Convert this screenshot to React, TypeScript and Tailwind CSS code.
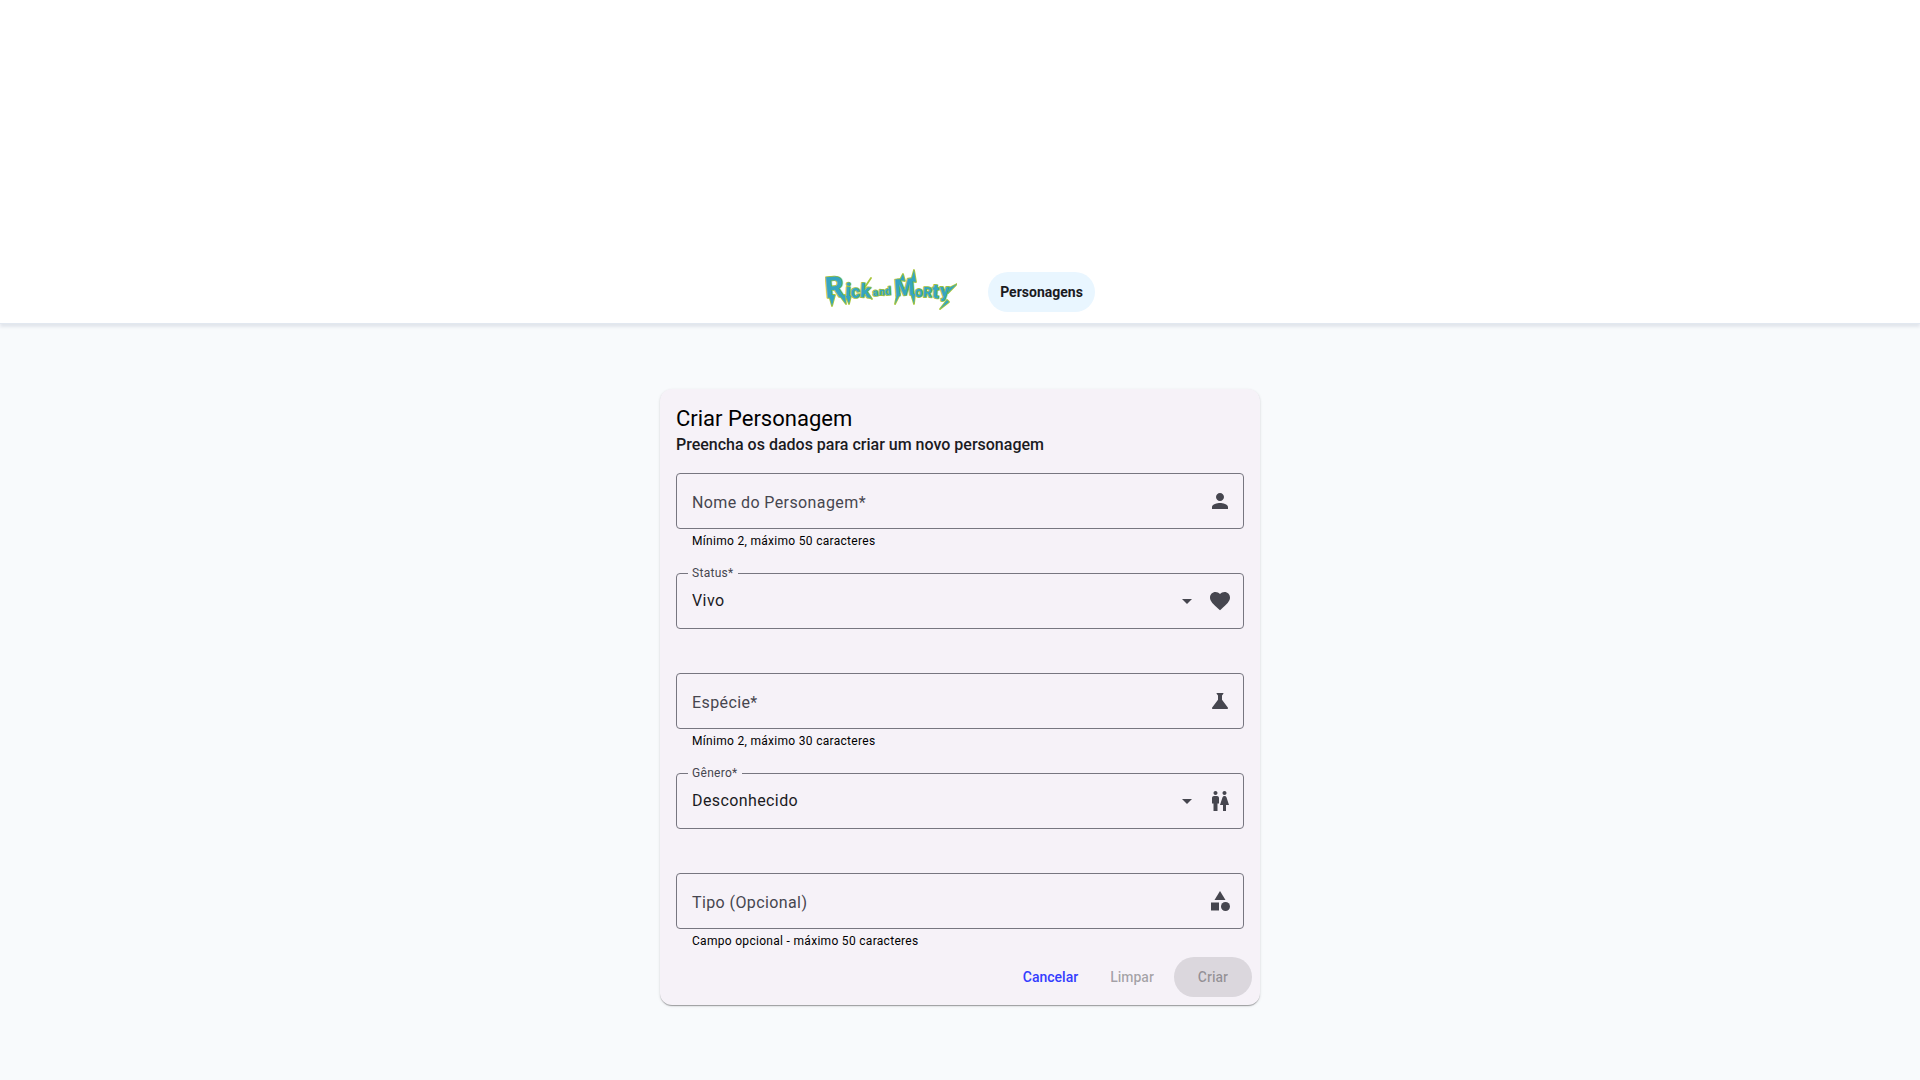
import type { ReactNode } from "react";
import { MdCategory, MdFavorite, MdPerson, MdScience, MdWc } from "react-icons/md";

const LETTERS = [
  { ch: "R", x: 1, y: 29, size: 29, turn: -5 },
  { ch: "i", x: 20, y: 29, size: 21, turn: 3 },
  { ch: "c", x: 26, y: 29, size: 18, turn: -3 },
  { ch: "k", x: 35, y: 28, size: 19, turn: 4 },
  { ch: "a", x: 48, y: 27, size: 10, turn: -4 },
  { ch: "n", x: 54, y: 26, size: 10, turn: 3 },
  { ch: "d", x: 60, y: 26, size: 11, turn: -3 },
  { ch: "M", x: 70, y: 27, size: 23, turn: -4 },
  { ch: "o", x: 90, y: 28, size: 14, turn: 0 },
  { ch: "R", x: 98, y: 28, size: 14, turn: 2 },
  { ch: "t", x: 107, y: 29, size: 20, turn: 3 },
  { ch: "y", x: 115, y: 28, size: 18, turn: 0 },
];

// Pointed drips and slashes around the lettering
const SPIKES =
  "M4 26l3 11 3-11zM15 27l6 8-1-9zM21 27l3 8 2-8zM72 25l-2 10 5-10zM86 25l3 10 1-10zM75 11l3-6 2 7zM86 12l3-11 2 12zM44 12l2-3-6 9zM41 26l6 4-4-6zM122 31l-7 9 9-7zM123 24l9-9-8 4z";

function Logo() {
  return (
    <svg viewBox="0 0 132 42" className="h-[42px] w-[132px]" role="img" aria-label="Rick and Morty">
      <g fontFamily="Roboto, sans-serif" fontWeight="800" strokeLinejoin="round">
        <path d={SPIKES} fill="#a9c63a" stroke="#a9c63a" strokeWidth="1.8" />
        {LETTERS.map((l, i) => (
          <text
            key={i}
            x={l.x}
            y={l.y}
            fontSize={l.size}
            rotate={l.turn}
            fill="#36a5c0"
            stroke="#9cc043"
            strokeWidth="1.8"
            paintOrder="stroke"
          >
            {l.ch}
          </text>
        ))}
        <path d={SPIKES} fill="#36a5c0" />
      </g>
    </svg>
  );
}

const BOX = "flex h-14 items-center rounded border border-[#777680] pr-[11px]";

function TextField({ id, label, hint, icon }: { id: string; label: string; hint: string; icon: ReactNode }) {
  return (
    <div className="relative h-[100px]">
      <div className={BOX}>
        <input
          id={id}
          type="text"
          placeholder=" "
          aria-describedby={id + "-hint"}
          className="peer h-full min-w-0 flex-1 bg-transparent px-[15px] text-base tracking-wide text-[#1b1b1f] outline-none"
        />
        <label
          htmlFor={id}
          className="pointer-events-none absolute -top-2 left-3 bg-[#f6f2f8] px-1 text-xs tracking-wide text-[#46464f] peer-placeholder-shown:top-[18px] peer-placeholder-shown:text-base"
        >
          {label}
        </label>
        {icon}
      </div>
      <p id={id + "-hint"} className="px-4 pt-1 text-xs tracking-wide text-black">
        {hint}
      </p>
    </div>
  );
}

function SelectField({ id, label, options, icon }: { id: string; label: string; options: string[]; icon: ReactNode }) {
  return (
    <div className="relative h-[100px]">
      <div className={BOX}>
        <label
          htmlFor={id}
          className="absolute -top-2 left-3 bg-[#f6f2f8] px-1 text-xs tracking-wide text-[#46464f]"
        >
          {label}
        </label>
        <select
          id={id}
          className="h-full min-w-0 flex-1 appearance-none bg-transparent px-[15px] text-base tracking-wide text-[#1b1b1f] outline-none"
        >
          {options.map((o) => (
            <option key={o}>{o}</option>
          ))}
        </select>
        <svg viewBox="0 0 10 5" className="mr-4 h-[5px] w-2.5 fill-[#46464f]" aria-hidden="true">
          <path d="M0 0h10L5 5z" />
        </svg>
        {icon}
      </div>
    </div>
  );
}

const ICON = "size-6 shrink-0 text-[#46464f]";

export default function App() {
  return (
    <div className="min-h-screen bg-[#f8fafc] font-[Roboto,sans-serif]">
      <header className="relative border-b border-[#e2e8f0] bg-white pt-[268px] pb-[11px] shadow-[0_3px_3px_#e2e6ec]">
        <nav className="flex items-center justify-center gap-[31px]">
          <a href="#inicio">
            <Logo />
          </a>
          <a
            href="#personagens"
            className="mt-1 flex h-10 items-center rounded-full bg-[#e9f6ff] px-3 text-sm font-bold text-[#1b1b1f]"
          >
            Personagens
          </a>
        </nav>
      </header>

      <main className="px-4 pt-[65px] pb-16">
        <form className="mx-auto max-w-[600px] rounded-xl bg-[#f6f2f8] shadow-[0_2px_1px_-1px_rgba(0,0,0,0.2),0_1px_1px_rgba(0,0,0,0.14),0_1px_3px_rgba(0,0,0,0.12)]">
          <div className="px-4 pt-4">
            <h1 className="text-[22px] leading-7 text-black">Criar Personagem</h1>
            <p className="text-base font-medium text-[#1b1b1f]">Preencha os dados para criar um novo personagem</p>
          </div>
          <div className="px-4 pt-4">
            <TextField
              id="nome"
              label="Nome do Personagem*"
              hint="Mínimo 2, máximo 50 caracteres"
              icon={<MdPerson className={ICON} />}
            />
            <SelectField
              id="status"
              label="Status*"
              options={["Vivo", "Morto", "Desconhecido"]}
              icon={<MdFavorite className={ICON} />}
            />
            <TextField
              id="especie"
              label="Espécie*"
              hint="Mínimo 2, máximo 30 caracteres"
              icon={<MdScience className={ICON} />}
            />
            <SelectField
              id="genero"
              label="Gênero*"
              options={["Desconhecido", "Feminino", "Masculino", "Sem gênero"]}
              icon={<MdWc className={ICON} />}
            />
            <TextField
              id="tipo"
              label="Tipo (Opcional)"
              hint="Campo opcional - máximo 50 caracteres"
              icon={<MdCategory className={ICON} />}
            />
          </div>
          <div className="-mt-4 flex justify-end gap-2 p-2 pt-0 text-sm font-medium">
            <button type="button" className="h-10 rounded-full px-3 text-[#343dff]">
              Cancelar
            </button>
            <button type="button" disabled className="h-10 rounded-full px-3 text-[#1b1b1f]/38">
              Limpar
            </button>
            <button type="submit" disabled className="h-10 rounded-full bg-[#1b1b1f]/12 px-6 text-[#1b1b1f]/38">
              Criar
            </button>
          </div>
        </form>
      </main>
    </div>
  );
}
